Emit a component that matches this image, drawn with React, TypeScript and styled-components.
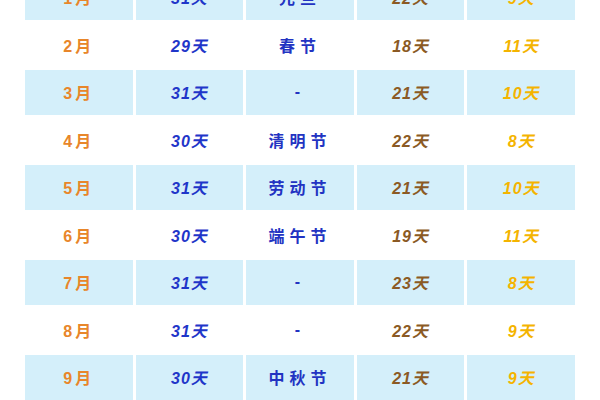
import React from 'react'
import styled, { createGlobalStyle } from 'styled-components'

const GlobalStyle = createGlobalStyle`
    html, body {
        margin: 0;
        padding: 0;
        background: #ffffff;
        overflow: hidden;
    }
`

const Page = styled.div`
    width: 600px;
    height: 400px;
    overflow: hidden;
    background: #ffffff;
`

// the screenshot is a crop of a longer table, so the first row starts above the edge
const Table = styled.div`
    margin: -25px 0 0 25px;
    width: 550px;
    display: grid;
    grid-template-columns: repeat(5, 1fr);
    column-gap: 3px;
    row-gap: 3px;
    grid-auto-rows: 44.5px;
`

type Tone = 'month' | 'days' | 'holiday' | 'work' | 'rest'

const toneColor: Record<Tone, string> = {
    month: '#e8862a',
    days: '#1f36c9',
    holiday: '#2233c2',
    work: '#8b5a24',
    rest: '#f4b400',
}

const Cell = styled.div<{ $shaded: boolean; $tone: Tone }>`
    display: flex;
    align-items: center;
    justify-content: center;
    background: ${p => (p.$shaded ? '#d4effa' : '#ffffff')};
    color: ${p => toneColor[p.$tone]};
    font-family: "Liberation Sans", "Noto Sans CJK SC", sans-serif;
    font-size: 16px;
    font-weight: bold;
    letter-spacing: ${p => (p.$tone === 'holiday' ? '5px' : p.$tone === 'month' ? '3px' : '1px')};
    font-style: ${p => (p.$tone === 'holiday' || p.$tone === 'month' ? 'normal' : 'italic')};
`

const rows = [
    ['1月', '31天', '元旦', '22天', '9天'],
    ['2月', '29天', '春节', '18天', '11天'],
    ['3月', '31天', '-', '21天', '10天'],
    ['4月', '30天', '清明节', '22天', '8天'],
    ['5月', '31天', '劳动节', '21天', '10天'],
    ['6月', '30天', '端午节', '19天', '11天'],
    ['7月', '31天', '-', '23天', '8天'],
    ['8月', '31天', '-', '22天', '9天'],
    ['9月', '30天', '中秋节', '21天', '9天'],
]

const tones: Tone[] = ['month', 'days', 'holiday', 'work', 'rest']

export default function App() {
    return (
        <Page>
            <GlobalStyle />
            <Table>
                {rows.map((row, r) =>
                    row.map((text, c) => (
                        <Cell key={`${r}-${c}`} $shaded={r % 2 === 0} $tone={tones[c]}>
                            {text}
                        </Cell>
                    ))
                )}
            </Table>
        </Page>
    )
}
